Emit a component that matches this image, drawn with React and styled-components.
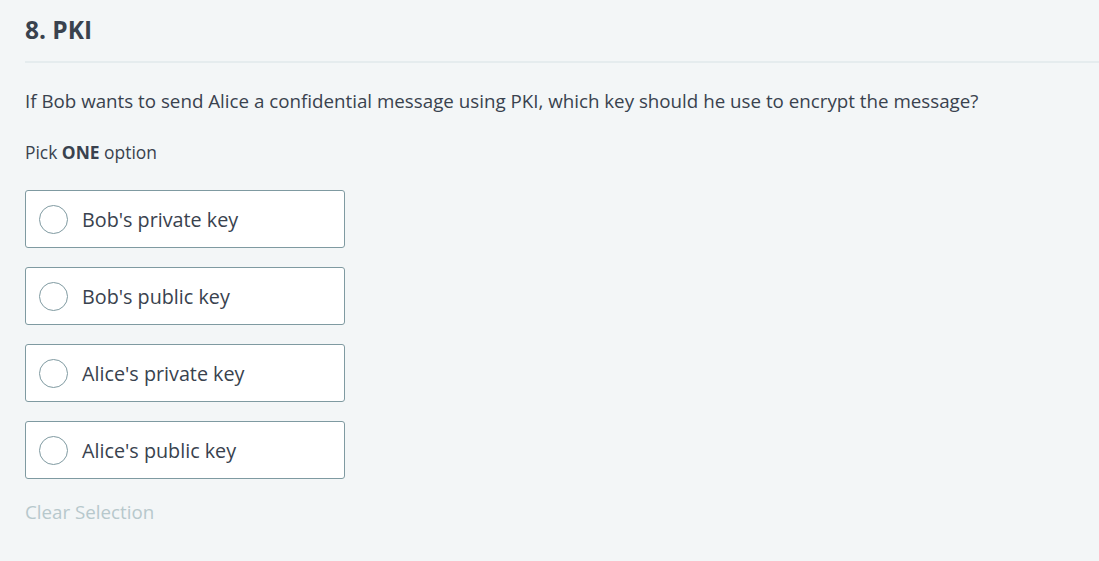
import React from "react";
import styled, { createGlobalStyle } from "styled-components";

const GlobalStyle = createGlobalStyle`
  html, body {
    margin: 0;
    background: #f3f6f7;
  }
  body {
    font-family: "Open Sans", "Noto Sans", sans-serif;
    color: #39424e;
  }
`;

const Page = styled.div`
  padding: 0 0 0 25px;
  min-height: 561px;
  box-sizing: border-box;
`;

const Header = styled.div`
  border-bottom: 2px solid #e5ecee;
  padding: 14px 0 15px;
`;

const Title = styled.h2`
  margin: 0;
  font-size: 24.5px;
  font-weight: 700;
  line-height: 32px;
  color: #39424e;
`;

const Question = styled.p`
  margin: 24px 0 0;
  font-size: 18.75px;
  line-height: 28px;
`;

const Hint = styled.p`
  margin: 25px 0 0;
  font-size: 17.4px;
  line-height: 24px;

  strong {
    font-weight: 700;
  }
`;

const Options = styled.div`
  display: flex;
  flex-direction: column;
  gap: 19px;
  margin-top: 26px;
`;

const Option = styled.label`
  display: flex;
  align-items: center;
  gap: 14px;
  width: 320px;
  height: 58px;
  box-sizing: border-box;
  padding: 0 13px;
  background: #ffffff;
  border: 1px solid #7f9aa1;
  border-radius: 3px;
  cursor: pointer;
  font-size: 19.75px;
  color: #39424e;
`;

const Radio = styled.span`
  width: 29px;
  height: 29px;
  box-sizing: border-box;
  border: 1px solid #7f9aa1;
  border-radius: 50%;
  flex-shrink: 0;
`;

const Clear = styled.button`
  margin-top: 19px;
  padding: 0;
  border: none;
  background: none;
  font-family: inherit;
  font-size: 18.75px;
  line-height: 28px;
  color: #b7c8cc;
  cursor: pointer;
`;

const choices = [
  "Bob's private key",
  "Bob's public key",
  "Alice's private key",
  "Alice's public key",
];

export default function App() {
  return (
    <Page>
      <GlobalStyle />
      <Header>
        <Title>8. PKI</Title>
      </Header>
      <Question>
        If Bob wants to send Alice a confidential message using PKI, which key
        should he use to encrypt the message?
      </Question>
      <Hint>
        Pick <strong>ONE</strong> option
      </Hint>
      <Options>
        {choices.map((c) => (
          <Option key={c}>
            <Radio />
            {c}
          </Option>
        ))}
      </Options>
      <Clear>Clear Selection</Clear>
    </Page>
  );
}
